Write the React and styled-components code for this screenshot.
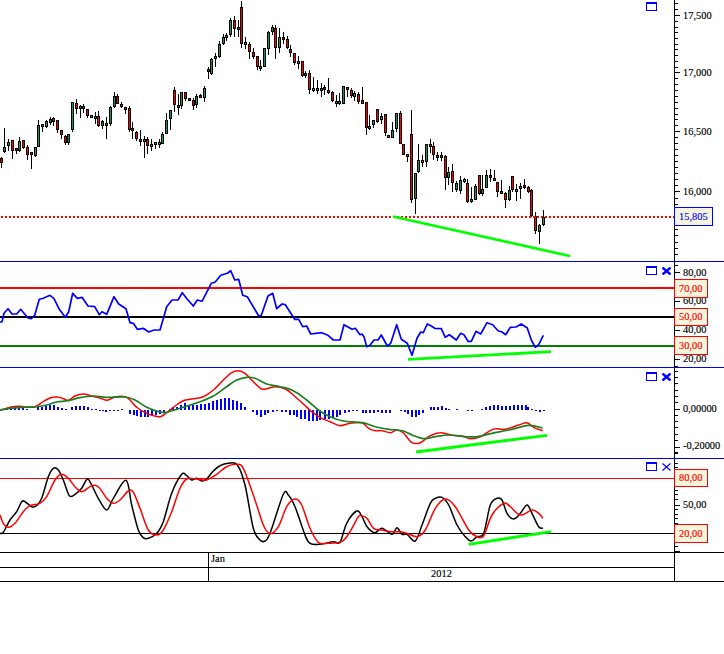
import React from 'react';
import styled, { createGlobalStyle } from 'styled-components';

const GlobalStyle = createGlobalStyle`
  html, body { margin: 0; padding: 0; background: #fff; }
  * { box-sizing: border-box; }
`;

const Page = styled.div`
  width: 724px;
  height: 654px;
  background: #fff;
  font-family: "Liberation Serif", "Times New Roman", serif;
  font-size: 10.4px;
  color: #000;
  overflow: hidden;
  -webkit-text-stroke: 0.15px currentColor;
`;
const Pane = styled.section`
  display: flex;
  height: ${(p) => p.$height + 1}px;
  border-bottom: 1px solid ${(p) => p.$rule || '#0000e6'};
`;
const Plot = styled.div`
  position: relative;
  flex: 0 0 674px;
  height: 100%;
`;
const Drawing = styled.svg`
  display: block;
`;
const Controls = styled.div`
  position: absolute;
  top: ${(p) => p.$top}px;
  right: 3px;
  display: flex;
  align-items: center;
  justify-content: flex-end;
  gap: 5px;
`;
const Axis = styled.div`
  position: relative;
  flex: 1;
  border-left: 1px solid #000;
`;
const AxisLabel = styled.span`
  position: absolute;
  left: 8px;
  top: ${(p) => p.$top}px;
  line-height: 12px;
  white-space: nowrap;
`;
const ValueBox = styled.div`
  position: absolute;
  left: -1px;
  top: ${(p) => p.$top}px;
  width: ${(p) => p.$width}px;
  height: ${(p) => p.$boxHeight}px;
  padding-left: 4px;
  line-height: ${(p) => p.$boxHeight - 2}px;
  background: #f5f5dc;
  color: ${(p) => p.$color};
  border: 1px solid ${(p) => p.$color};
  z-index: 1;
`;
const TimeScale = styled.footer`
  display: flex;
  height: 29px;
  border-bottom: 1px solid #000;
`;
const TimeRows = styled.div`
  flex: 0 0 674px;
  display: flex;
  flex-direction: column;
`;
const TimeRow = styled.div`
  display: flex;
  height: ${(p) => p.$height}px;
  border-bottom: ${(p) => (p.$ruled ? '1px solid #000' : 'none')};
`;
const TimeStart = styled.div`
  flex: 0 0 209px;
  border-right: 1px solid #000;
`;
const TimeCell = styled.div`
  flex: 1;
  line-height: 12px;
  text-align: ${(p) => p.$align};
  padding-left: ${(p) => (p.$align === 'left' ? '2px' : '0')};
`;
const AxisStub = styled.div`
  flex: 1;
  border-left: 1px solid #000;
`;

const c1 = `4 r 475 488 471 503|13 g 442 456 384 458|25 g 427 438 417 452|37 r 421 452 421 476|49 r 445 452 445 461|58 g 424 452 411 456|70 r 421 445 421 448|82 r 442 464 436 479|94 r 457 464 457 506|106 g 442 467 442 470|115 g 376 442 361 442|127 g 373 380 373 396|139 g 364 380 361 385|151 g 358 368 352 374|160 r 355 367 350 377|172 r 361 389 361 398|184 r 391 406 391 416|196 r 409 428 406 434|205 g 403 428 403 434|217 g 307 391 307 395|229 r 310 328 297 341|241 g 319 326 316 353|250 g 319 326 313 340|262 r 328 349 328 353|274 g 346 352 346 353|286 g 349 356 337 371|295 r 349 379 334 382|307 g 364 379 361 388|319 r 370 376 352 416|331 g 322 373 319 377|343 g 289 322 277 323|352 r 289 313 283 313|364 r 313 320 306 325|376 r 322 328 322 341|388 r 325 391 319 395|397 r 385 391 367 416|409 r 397 418 394 422|421 r 418 424 391 437|433 g 418 424 409 475|442 r 418 439 412 461|454 g 433 439 418 452|466 g 427 433 427 446|478 g 427 433 418 443|487 g 403 433 397 433|499 g 361 403 340 403|511 g 331 358 331 389|523 r 271 316 262 335|535 g 316 322 283 344|544 g 277 319 277 328|556 r 277 298 277 304|568 r 295 301 295 304|580 r 301 319 294 329|589 g 289 316 283 325|601 r 286 292 283 295|613 g 265 295 259 305|625 r 208 217 202 236|634 g 178 223 175 226|646 g 169 175 160 200|658 g 133 172 124 175|670 g 112 133 103 136|679 g 106 112 100 124|691 g 61 106 55 112|703 r 61 88 49 112|715 g 82 88 61 112|724 r 22 133 4 145|736 g 127 133 112 148|748 r 133 157 127 178|760 r 157 172 145 178|772 r 169 202 169 211|781 g 199 205 181 214|793 g 145 202 145 202|805 g 97 148 94 166|817 g 82 97 76 106|826 r 85 145 76 176|838 g 112 145 85 160|850 r 112 118 97 133|862 r 118 145 109 148|871 r 148 160 136 170|883 r 160 190 160 196|895 g 184 190 169 208|907 r 184 229 184 232|916 g 220 226 214 235|928 r 220 271 211 283|940 g 265 271 232 277|952 g 265 271 241 283|964 g 265 271 250 290|973 r 262 271 256 286|985 r 271 277 235 283|997 r 277 304 274 307|1009 g 304 310 286 322|1018 g 304 310 280 316|1030 g 259 313 259 313|1042 r 262 271 262 292|1054 r 271 289 265 295|1063 g 280 292 274 304|1075 r 283 307 277 311`;
const c2 = `2 r 300 312 262 312|14 r 307 385 307 406|23 g 379 385 346 391|35 g 361 376 361 385|46 r 328 367 328 370|58 g 349 361 340 373|70 r 343 400 343 409|79 r 406 415 406 415|91 g 391 415 367 415|103 g 340 388 340 397|115 r 340 433 334 433|124 r 433 466 433 466|136 r 463 469 463 487|148 r 403 601 331 610|160 g 520 598 520 643|169 g 481 517 433 520|181 r 481 487 466 502|193 g 433 487 433 502|205 r 433 442 418 460|214 r 439 466 427 481|226 g 466 472 457 484|238 g 466 472 457 484|250 r 469 535 466 571|259 g 517 535 502 556|271 r 514 550 493 577|283 g 550 571 544 577|295 g 541 574 529 583|307 g 538 547 535 550|316 r 550 607 538 610|328 g 598 607 562 610|340 g 559 601 553 601|352 r 526 583 526 586|361 g 568 583 526 589|373 g 526 565 511 565|385 r 526 535 508 547|397 r 535 544 511 544|406 r 547 577 547 592|418 r 574 580 541 583|430 r 580 601 577 625|442 g 571 601 559 604|451 r 529 571 529 577|463 g 568 574 553 604|475 g 559 568 550 598|487 r 556 562 538 568|499 r 562 577 559 580|508 r 571 649 568 652|520 r 649 694 637 703|532 g 676 697 673 733|544 g 652 676 631 679`;

const parseCandles = (src, off) =>
  src.split('|').map((row) => {
    const [z, c, bt, bb, wt, wb] = row.split(' ');
    return {
      x: Math.floor(+z / 3) + off,
      c,
      bt: Math.round(+bt / 3),
      bb: Math.round(+bb / 3),
      wt: Math.round(+wt / 3),
      wb: Math.round(+wb / 3),
    };
  });
const candles = [...parseCandles(c1, 0), ...parseCandles(c2, 362)];

const pts = (s, xo, yo) =>
  s.trim().split(/\s+/).map((p) => {
    const [x, y] = p.split(',').map(Number);
    return [x / 3 + xo, y / 3 + yo];
  });

const smooth = (p) => {
  let d = `M${p[0][0].toFixed(1)} ${p[0][1].toFixed(1)}`;
  for (let i = 0; i < p.length - 1; i++) {
    const a = p[i - 1] || p[i];
    const b = p[i];
    const c = p[i + 1];
    const e = p[i + 2] || c;
    d += `C${(b[0] + (c[0] - a[0]) / 6).toFixed(1)} ${(b[1] + (c[1] - a[1]) / 6).toFixed(1)} ${(c[0] - (e[0] - b[0]) / 6).toFixed(1)} ${(c[1] - (e[1] - b[1]) / 6).toFixed(1)} ${c[0].toFixed(1)} ${c[1].toFixed(1)}`;
  }
  return d;
};
const poly = (p) => p.map((q) => `${q[0].toFixed(1)},${q[1].toFixed(1)}`).join(' ');

const rsi = [
  ...pts(`0,187 6,185 12,160 24,146 36,162 50,162 62,148 72,160 84,174 94,176 104,166 118,118 130,115 150,106 162,116 178,148 196,172 206,155 218,100 232,115 246,112 264,138 284,140 298,164 306,155 320,163 342,110 356,132 378,146 390,188 400,190 412,208 430,205 446,216 462,210 480,210 500,140 516,120 534,120 547,98 562,118 580,138 592,120 606,124 634,70 646,66 662,46 682,40 692,32 704,60 716,58 728,106 742,110 776,168 784,166 804,108 818,100 830,146 846,132 856,134 884,178 896,178 908,200 920,198 932,222 965,218 984,226 1000,240 1020,240 1032,194 1056,208 1066,205 1080,224`, 0, 260),
  ...pts(`0,222 6,230 14,260 24,256 36,240 48,240 58,225 76,258 86,250 104,194 118,238 136,250 150,286 165,235 176,216 184,218 196,192 208,198 218,205 238,206 250,232 262,224 283,240 296,220 306,224 318,244 328,244 342,214 356,222 375,188 392,194 408,212 420,216 431,224 445,202 462,201 478,192 496,204 508,240 520,262 530,254 544,226`, 362, 260),
];
const macdRed = [
  ...pts(`0,450 12,448 30,442 60,439 80,441 105,440 130,425 150,414 170,411 190,416 205,421 225,408 250,402 275,408 300,414 322,421 345,411 375,410 390,420 410,442 440,460 465,468 482,470 500,458 525,438 550,422 575,417 610,410 640,390 670,360 695,338 715,332 735,340 760,365 785,387 805,385 825,380 855,386 880,405 910,432 935,455 960,472 990,485 1020,497 1050,490`, 0, 260),
  ...pts(`0,488 20,505 40,512 60,512 85,518 105,510 125,520 150,548 175,548 205,527 235,518 270,526 300,528 325,536 355,530 385,512 400,506 430,508 470,495 495,488 515,502 542,512`, 362, 260),
];
const macdGreen = [
  ...pts(`0,450 30,445 60,442 105,441 140,435 170,426 205,422 240,413 280,408 320,412 375,411 405,420 440,442 480,456 500,457 540,445 600,425 640,408 680,380 710,360 740,352 765,355 800,372 840,380 880,392 920,420 955,450 990,470 1030,483`, 0, 260),
  ...pts(`0,488 40,500 80,508 120,512 150,525 185,536 220,530 260,525 310,530 345,530 390,520 440,510 500,496 542,504`, 362, 260),
];
const stochBlack = [
  ...pts(`0,235 10,232 30,195 50,170 65,140 75,140 95,155 110,152 125,130 145,65 160,40 175,45 190,75 208,122 225,118 245,100 262,72 275,90 295,130 320,165 340,130 378,76 395,150 415,225 430,248 445,250 470,235 490,200 515,115 545,58 560,62 575,75 590,70 605,78 620,72 640,48 660,32 685,25 712,30 735,90 760,220 780,255 795,258 810,235 850,118 865,120 885,155 915,240 930,265 960,268 1000,260 1020,262 1040,205 1070,168`, 0, 455),
  ...pts(`0,185 15,215 38,233 60,220 90,238 105,218 120,238 135,238 160,258 180,210 205,145 220,130 240,127 260,150 285,210 310,245 328,258 345,245 365,235 385,150 405,130 420,135 435,175 455,192 475,175 495,150 510,175 530,215 543,220`, 362, 455),
];
const stochRed = [
  ...pts(`0,180 10,205 25,217 45,205 70,170 90,152 120,145 140,125 165,75 185,58 205,70 225,95 245,110 275,92 295,95 320,130 340,145 360,135 385,108 400,112 420,160 445,225 470,240 490,225 515,170 540,100 560,72 590,72 620,75 650,58 680,35 710,28 730,40 760,120 790,210 810,236 835,215 860,155 885,132 905,150 930,220 955,262 985,265 1025,260 1050,230 1075,185`, 0, 455),
  ...pts(`0,183 15,190 35,220 60,225 85,230 105,230 130,233 165,245 190,225 220,160 250,132 280,155 320,225 345,245 365,242 390,180 425,145 445,155 475,180 510,165 530,175 543,190`, 362, 455),
];

const h1 = `22,4 34,4 46,5 58,5 70,5 82,4 115,8 127,10 139,12 150,14 163,14 174,10 186,5 198,3 216,8 228,12 240,12 252,12 264,8 276,4 288,2 300,-2 310,-3 320,-5 332,-3 344,-1 356,-1 368,1 390,-12 402,-14 412,-18 424,-20 436,-22 446,-22 458,-18 470,-15 482,-12 494,-5 510,2 520,8 532,10 544,16 556,20 568,16 580,14 592,14 604,18 616,18 628,22 640,26 652,30 664,34 676,36 688,36 700,30 712,26 724,20 736,10 760,-6 772,-14 784,-20 796,-16 806,-8 820,-6 832,-2 846,-6 858,-6 870,-14 882,-16 892,-20 904,-26 916,-28 928,-32 940,-34 952,-34 962,-30 975,-28 988,-26 1000,-24 1012,-22 1022,-14 1036,-10 1048,-6 1060,-4 1072,-3`;
const h2 = `4,-8 14,-10 26,-10 38,-10 50,-7 62,-8 74,-10 86,-8 118,-4 130,-6 140,-12 150,-22 162,-20 172,-14 184,-10 208,8 218,8 230,10 240,12 252,6 262,4 285,2 318,-3 330,-4 362,3 374,8 386,12 398,16 408,14 420,12 432,12 444,12 456,14 468,14 480,14 492,14 500,10 510,3 522,-4 534,-6 546,-4`;
const bars = [h1, h2].flatMap((s, k) =>
  s.split(' ').map((p) => {
    const [z, h] = p.split(',').map(Number);
    const height = Math.max(1, Math.round(Math.abs(h) / 3));
    return { x: Math.floor(z / 3) + k * 362 - 1, y: h > 0 ? 410 - height : 410, height };
  })
);

const range = (from, step, n) => Array.from({ length: n }, (_, i) => from + step * i);
const mainTicks = [
  ...[15.7, 72.7, 131.7, 191.7].map((y) => ({ y, major: true })),
  ...[3.9, 9.8, ...range(21.4, 5.7, 9), ...range(78.6, 5.9, 9), ...range(137.7, 6, 9), ...range(198, 6.3, 10)].map((y) => ({ y })),
];
const rsiTicks = [
  ...[272, 301, 330, 359].map((y) => ({ y, major: true })),
  ...[265, 286.5, 315.5, 344.5, 366].map((y) => ({ y })),
];
const macdTicks = [
  ...[409, 447].map((y) => ({ y, major: true })),
  ...range(371.3, 6.28, 14).filter((y) => Math.abs(y - 409) > 2 && Math.abs(y - 447) > 2).map((y) => ({ y })),
  { y: 453.3 },
];
const stochTicks = [
  ...[505, 551].map((y) => ({ y, major: true })),
  ...[463, 467.5, 472, 490, 494.6, 499.2, 509.6, 514.2, 518.8, 523.4, 537, 541.6, 546.2].map((y) => ({ y })),
];

const Ticks = ({ top, height, ticks }) => (
  <Drawing width="49" height={height} viewBox={`0 ${top} 49 ${height}`} shapeRendering="crispEdges">
    {ticks.map((t) => (
      <rect key={t.y} x="0" y={Math.floor(t.y)} width={t.major ? 5 : 3} height="1" fill="#000" />
    ))}
  </Drawing>
);

const WindowIcon = () => (
  <svg width="11" height="9" viewBox="0 0 11 9" shapeRendering="crispEdges">
    <path d="M0 0h11v9H0z" fill="#0000ff" />
    <path d="M1 2h9v6H1z" fill="#fff" />
  </svg>
);
const CloseIcon = ({ weight }) => (
  <svg width="9" height="8" viewBox="0 0 9 8">
    <path d="M0.5 0.5L8.5 7.5M8.5 0.5L0.5 7.5" stroke="#0000ff" strokeWidth={weight} fill="none" />
  </svg>
);

const TrendLine = ({ x1, y1, x2, y2 }) => (
  <line x1={x1} y1={y1} x2={x2} y2={y2} stroke="#00ff00" strokeWidth="2.8" />
);
const Level = ({ y, color, weight }) => (
  <rect x="0" y={y} width="674" height={weight} fill={color} shapeRendering="crispEdges" />
);

const Candles = () => (
  <g shapeRendering="crispEdges">
    {candles.map((k) => (
      <g key={`${k.x}`}>
        <rect x={k.x} y={k.wt} width="1" height={Math.max(1, k.wb - k.wt)} fill="#000" />
        <rect x={k.x - 1} y={k.bt} width="3" height={Math.max(3, k.bb - k.bt)} fill="#000" />
        <rect x={k.x} y={k.bt + 1} width="1" height={Math.max(1, k.bb - k.bt - 2)} fill={k.c === 'r' ? '#ff0000' : '#1f9055'} />
      </g>
    ))}
  </g>
);

const Chart = ({ top, height, children }) => (
  <Drawing width="674" height={height} viewBox={`0 ${top} 674 ${height}`}>
    {children}
  </Drawing>
);

const labelTop = (y, top) => y - top - 6;

export default function App() {
  return (
    <Page>
      <GlobalStyle />
      <Pane $height={261}>
        <Plot>
          <Chart top={0} height={261}>
            <Candles />
            <line x1="0" y1="217" x2="674" y2="217" stroke="#ff0000" strokeWidth="2" strokeDasharray="2 2" strokeDashoffset="3" shapeRendering="crispEdges" />
            <TrendLine x1={393} y1={216.5} x2={570} y2={256} />
          </Chart>
          <Controls $top={2}><WindowIcon /><svg width="9" height="8" /></Controls>
        </Plot>
        <Axis>
          <Ticks top={0} height={261} ticks={mainTicks} />
          <AxisLabel $top={labelTop(15.7, 0)}>17,500</AxisLabel>
          <AxisLabel $top={labelTop(72.7, 0)}>17,000</AxisLabel>
          <AxisLabel $top={labelTop(131.7, 0)}>16,500</AxisLabel>
          <AxisLabel $top={labelTop(191.7, 0)}>16,000</AxisLabel>
          <ValueBox $top={207} $width={39} $boxHeight={19} $color="#0000ff">15,805</ValueBox>
        </Axis>
      </Pane>

      <Pane $height={105}>
        <Plot>
          <Chart top={262} height={105}>
            <Level y={287} color="#ff0000" weight={2} />
            <Level y={316} color="#000" weight={2} />
            <Level y={345} color="#008000" weight={2} />
            <polyline points={poly(rsi)} fill="none" stroke="#0000ff" strokeWidth="1.7" strokeLinejoin="round" />
            <TrendLine x1={408} y1={359.3} x2={551} y2={351.7} />
          </Chart>
          <Controls $top={4}><WindowIcon /><CloseIcon weight={2.4} /></Controls>
        </Plot>
        <Axis>
          <Ticks top={262} height={105} ticks={rsiTicks} />
          <AxisLabel $top={labelTop(272.5, 262)}>80,00</AxisLabel>
          <AxisLabel $top={labelTop(301, 262)}>60,00</AxisLabel>
          <AxisLabel $top={labelTop(330, 262)}>40,00</AxisLabel>
          <AxisLabel $top={labelTop(359, 262)}>20,00</AxisLabel>
          <ValueBox $top={17} $width={34} $boxHeight={19} $color="#ff0000">70,00</ValueBox>
          <ValueBox $top={46} $width={34} $boxHeight={18} $color="#ff0000">50,00</ValueBox>
          <ValueBox $top={74} $width={34} $boxHeight={19} $color="#ff0000">30,00</ValueBox>
        </Axis>
      </Pane>

      <Pane $height={90}>
        <Plot>
          <Chart top={368} height={90}>
            <g shapeRendering="crispEdges">
              {bars.map((b) => (
                <rect key={b.x} x={b.x} y={b.y} width="2" height={b.height} fill="#0000ff" />
              ))}
            </g>
            <path d={smooth(macdRed)} fill="none" stroke="#ff0000" strokeWidth="1.5" />
            <path d={smooth(macdGreen)} fill="none" stroke="#1a8020" strokeWidth="1.7" />
            <TrendLine x1={416} y1={452} x2={547} y2={435.3} />
          </Chart>
          <Controls $top={4}><WindowIcon /><CloseIcon weight={2.4} /></Controls>
        </Plot>
        <Axis>
          <Ticks top={368} height={90} ticks={macdTicks} />
          <AxisLabel $top={labelTop(408.5, 368)}>0,00000</AxisLabel>
          <AxisLabel $top={labelTop(445.5, 368)}>-0,20000</AxisLabel>
        </Axis>
      </Pane>

      <Pane $height={93} $rule="#000">
        <Plot>
          <Chart top={459} height={93}>
            <Level y={478} color="#ff0000" weight={1} />
            <Level y={533} color="#000" weight={1} />
            <path d={smooth(stochBlack)} fill="none" stroke="#000" strokeWidth="1.5" />
            <path d={smooth(stochRed)} fill="none" stroke="#ff0000" strokeWidth="1.5" />
            <TrendLine x1={468.7} y1={544.3} x2={551} y2={531.7} />
          </Chart>
          <Controls $top={3}><WindowIcon /><CloseIcon weight={1.2} /></Controls>
        </Plot>
        <Axis>
          <Ticks top={459} height={93} ticks={stochTicks} />
          <AxisLabel $top={labelTop(504.5, 459)}>50,00</AxisLabel>
          <ValueBox $top={10} $width={34} $boxHeight={18} $color="#ff0000">80,00</ValueBox>
          <ValueBox $top={65} $width={34} $boxHeight={19} $color="#ff0000">20,00</ValueBox>
        </Axis>
      </Pane>

      <TimeScale>
        <TimeRows>
          <TimeRow $height={15} $ruled>
            <TimeStart />
            <TimeCell $align="left">Jan</TimeCell>
          </TimeRow>
          <TimeRow $height={13}>
            <TimeStart />
            <TimeCell $align="center">2012</TimeCell>
          </TimeRow>
        </TimeRows>
        <AxisStub />
      </TimeScale>
    </Page>
  );
}
